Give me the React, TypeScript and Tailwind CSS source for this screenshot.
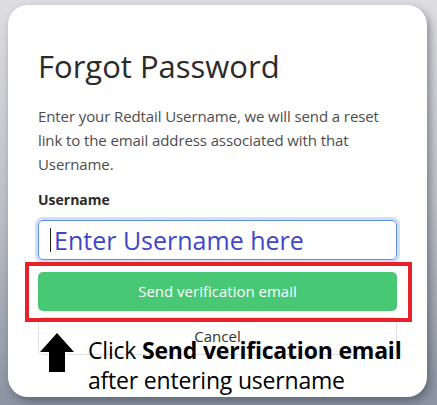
export default function App() {
  return (
    <div
      className="w-[437px] h-[405px] overflow-hidden bg-gradient-to-b from-[#dedee2] via-[#bfc1c7] to-[#8a94a2] pt-[5px] pl-[8px]"
      style={{ fontFamily: '"Open Sans", "Noto Sans", sans-serif' }}
    >
      <div className="relative w-[419px] h-[392px] rounded-[20px] bg-white overflow-hidden shadow-[3px_4px_8px_rgba(40,45,60,0.45)] px-[30px] pt-[39px]">
        <h2 className="text-[31px] leading-[44px] font-medium text-[#2b2b2b]">
          Forgot Password
        </h2>

        <p className="mt-[16px] text-[15px] leading-[24px] text-[#4d4d4d] tracking-[-0.1px]">
          Enter your Redtail Username, we will send a reset
          <br />
          link to the email address associated with that
          <br />
          Username.
        </p>

        <label className="block mt-[14px] text-[14px] leading-[20px] font-bold text-[#2b2b2b]">
          Username
        </label>

        <div className="mt-[10px] h-[40px] rounded-[5px] border border-[#5c8ee8] ring-[3px] ring-[#cfe0fc] flex items-center pl-[11px]">
          <span className="w-px h-[24px] bg-[#222] mr-[3px]" />
          <span className="text-[25px] leading-none text-[#3f46c9]">Enter Username here</span>
        </div>

        <div className="mt-[12px] h-[39px] rounded-[5px] bg-[#48c774] flex items-center justify-center text-[15px] text-white">
          Send verification email
        </div>

        <div className="mt-[6px] h-[38px] rounded-[5px] border border-[#dee2e6] flex items-center justify-center text-[15px] text-[#333]">
          Cancel
        </div>

        {/* red highlight round the send button */}
        <div className="absolute left-[17px] top-[257px] w-[387px] h-[60px] border-[4px] border-[#e8202a]" />

        {/* annotation */}
        <div className="absolute left-[32px] top-[328px] flex items-start gap-[14px]">
          <svg width="34" height="39" viewBox="0 0 34 39">
            <path d="M17 0 L34 19 L25 19 L25 39 L9 39 L9 19 L0 19 Z" fill="#000" />
          </svg>
          <div className="text-[23px] leading-[30px] text-black mt-[2px] tracking-[-0.2px]">
            Click <b className="font-bold">Send verification email</b>
            <br />
            after entering username
          </div>
        </div>
      </div>
    </div>
  );
}
